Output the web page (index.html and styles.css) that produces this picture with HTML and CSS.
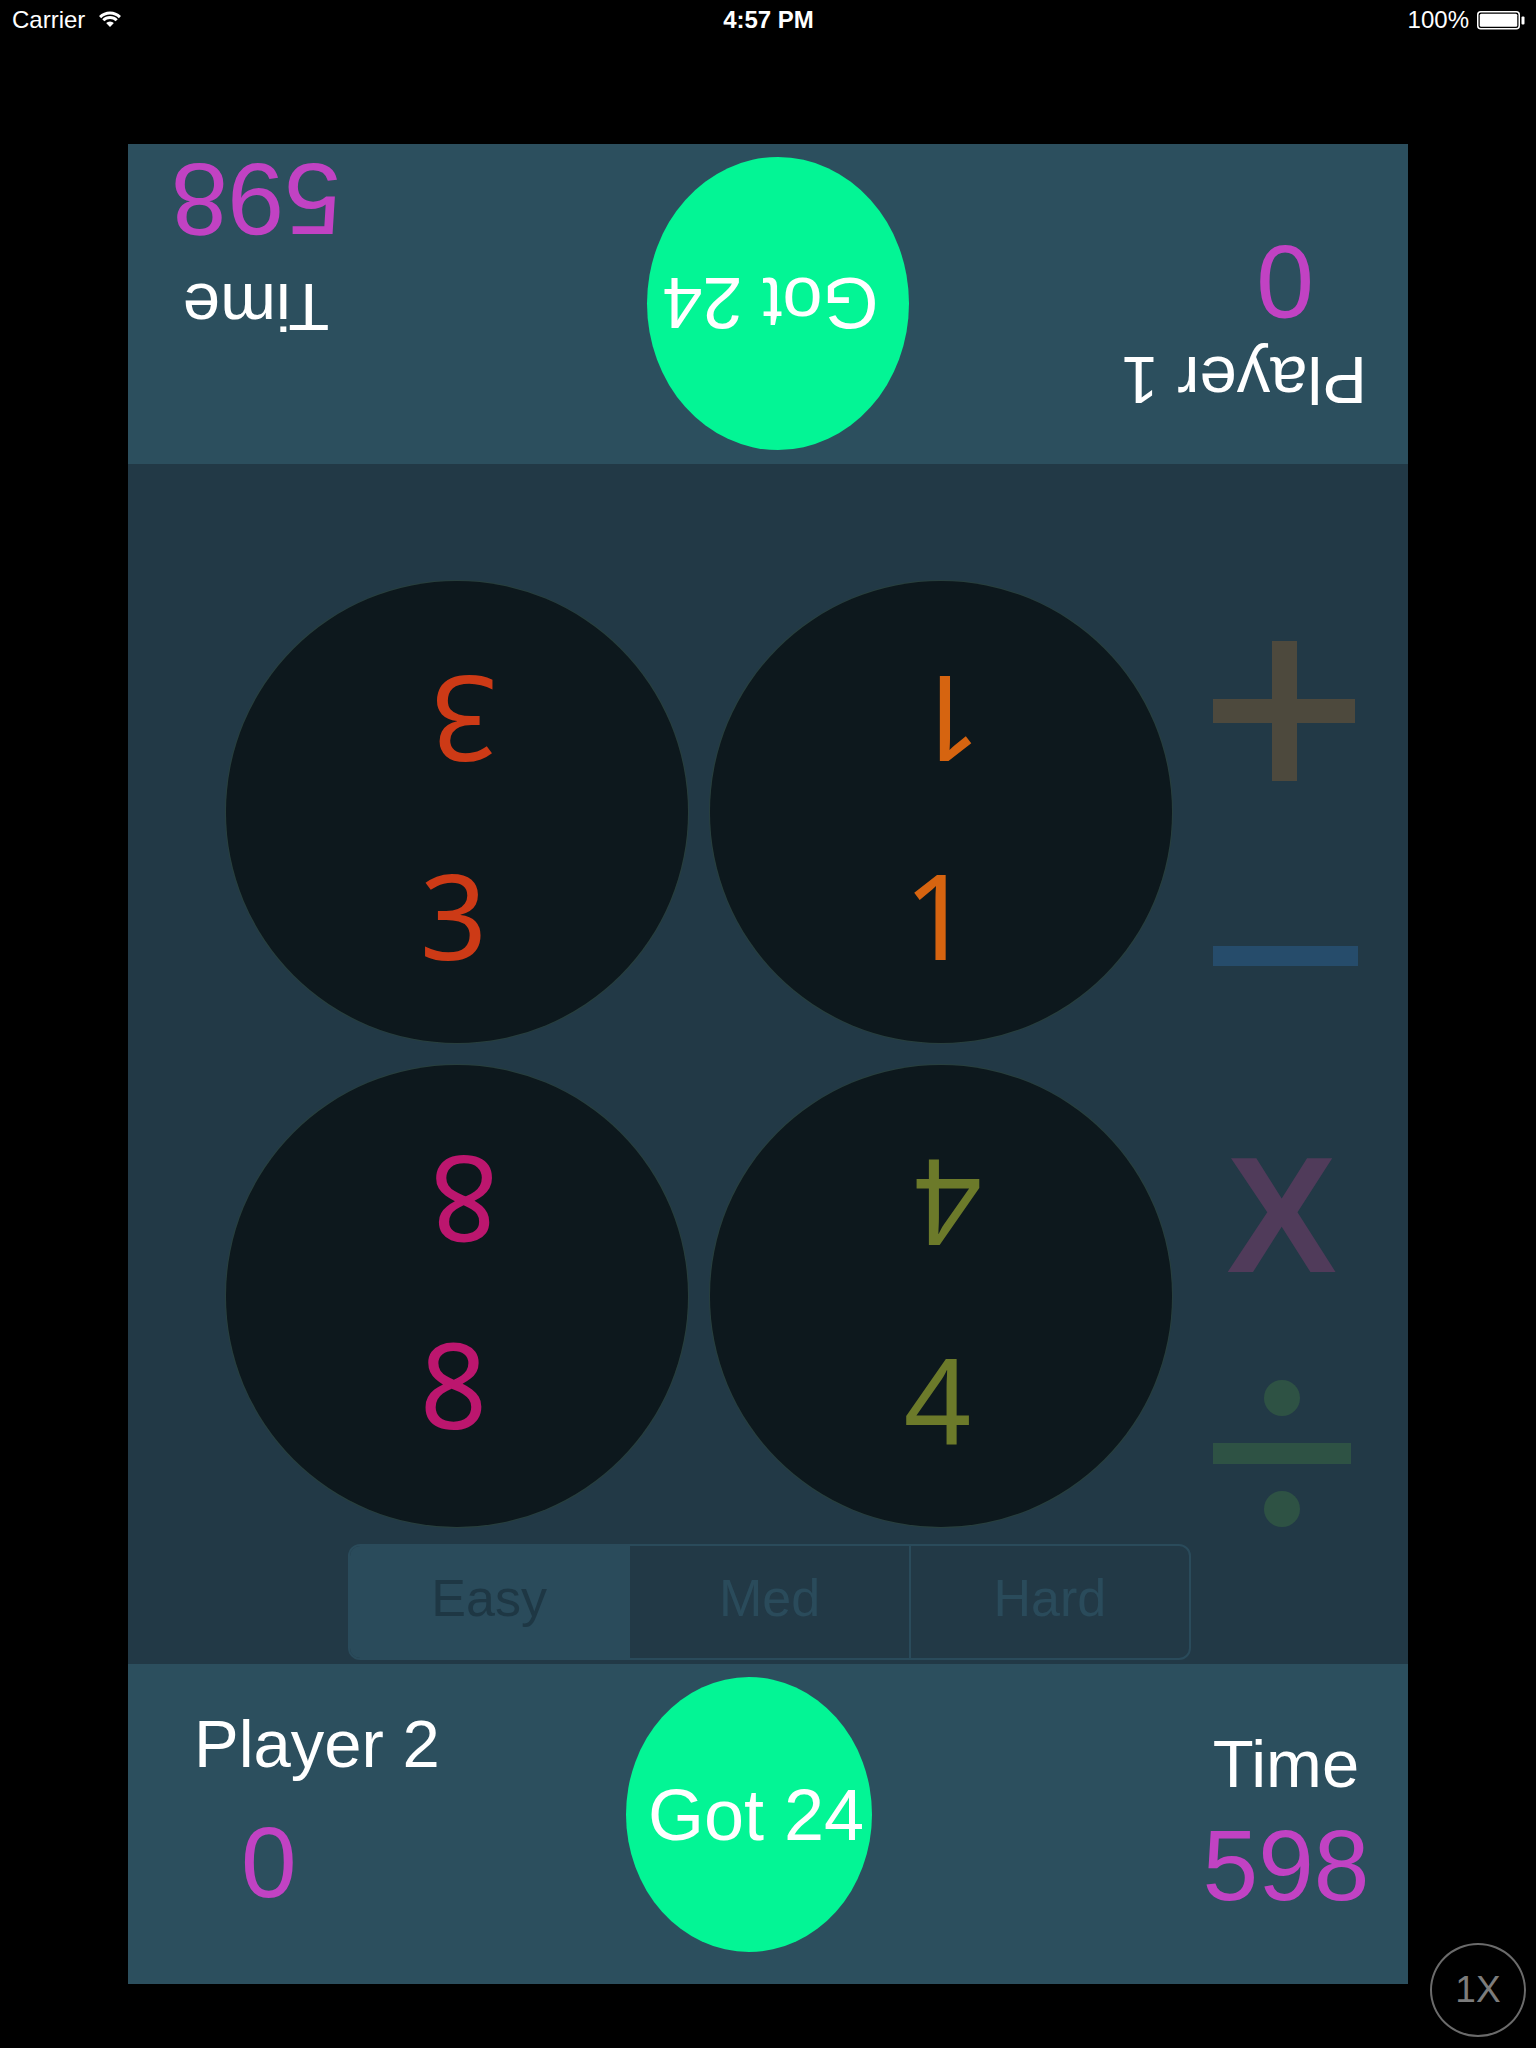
FILE: index.html
```html
<!DOCTYPE html>
<html lang="en">
<head>
<meta charset="utf-8">
<title>24 Game</title>
<link rel="stylesheet" href="styles.css">
</head>
<body>
<header class="status">
  <div class="status-left">
    <span>Carrier</span>
    <svg class="wifi" viewBox="0 0 24 16" width="24" height="16">
      <path d="M12 16 L8.1 12.1 A5.5 5.5 0 0 1 15.9 12.1 Z" fill="#fff"/>
      <path d="M5.3 9.3 A9.5 9.5 0 0 1 18.7 9.3" fill="none" stroke="#fff" stroke-width="3"/>
      <path d="M2.1 6.1 A14 14 0 0 1 21.9 6.1" fill="none" stroke="#fff" stroke-width="3"/>
    </svg>
  </div>
  <div class="status-time">4:57 PM</div>
  <div class="status-right">
    <span>100%</span>
    <svg class="battery" viewBox="0 0 48 19" width="48" height="19">
      <rect x="0.75" y="0.75" width="41.5" height="17" rx="3" fill="none" stroke="#fff" stroke-width="1.5"/>
      <rect x="2.75" y="2.75" width="37.5" height="13" rx="1.5" fill="#fff"/>
      <rect x="44.5" y="5.5" width="3" height="8" rx="1" fill="#fff"/>
    </svg>
  </div>
</header>

<main class="panel">
  <section class="bar bar--top">
    <div class="side side--player">
      <div class="label">Player 1</div>
      <div class="score">0</div>
    </div>
    <div class="got"><span>Got 24</span></div>
    <div class="side side--time">
      <div class="label">Time</div>
      <div class="timer">598</div>
    </div>
  </section>

  <section class="board">
    <div class="board-row">
      <div class="cards">
        <div class="card card--3"><span class="num num--flip">3</span><span class="num num--up">3</span></div>
        <div class="card card--1"><span class="num num--flip">1</span><span class="num num--up">1</span></div>
        <div class="card card--8"><span class="num num--flip">8</span><span class="num num--up">8</span></div>
        <div class="card card--4"><span class="num num--flip">4</span><span class="num num--up">4</span></div>
      </div>
      <div class="ops">
        <div class="op op--plus"></div>
        <div class="op op--minus"></div>
        <div class="op op--times">X</div>
        <div class="op op--div">
          <span class="dot"></span>
          <span class="div-bar"></span>
          <span class="dot"></span>
        </div>
      </div>
    </div>
    <div class="segmented">
      <div class="seg seg--on">Easy</div>
      <div class="seg">Med</div>
      <div class="seg">Hard</div>
    </div>
  </section>

  <section class="bar bar--bottom">
    <div class="side side--player">
      <div class="label">Player 2</div>
      <div class="score">0</div>
    </div>
    <div class="got"><span>Got 24</span></div>
    <div class="side side--time">
      <div class="label">Time</div>
      <div class="timer">598</div>
    </div>
  </section>
</main>

<div class="speed">1X</div>
</body>
</html>
```

FILE: styles.css
```css
html, body {
  margin: 0;
  padding: 0;
  background: #000;
}

body {
  width: 1536px;
  height: 2048px;
  font-family: "Liberation Sans", Arial, sans-serif;
  color: #fff;
  overflow: hidden;
}

/* ---------- status bar ---------- */
.status {
  height: 40px;
  display: grid;
  grid-template-columns: 1fr auto 1fr;
  align-items: center;
  padding: 0 11px 0 12px;
  font-size: 24px;
  line-height: 40px;
  color: #fff;
}

.status-left {
  display: flex;
  align-items: center;
  justify-self: start;
}

.wifi {
  margin-left: 13px;
  margin-top: -2px;
}

.status-time {
  font-weight: 700;
  font-size: 24px;
}

.status-right {
  display: flex;
  align-items: center;
  justify-self: end;
}

.battery {
  margin-left: 8px;
  margin-top: 1px;
}

/* ---------- game panel ---------- */
.panel {
  margin: 104px 0 0 128px;
  width: 1280px;
}

.bar {
  height: 320px;
  background: #2C4F5E;
  display: flex;
  align-items: flex-start;
}

.bar--top {
  transform: rotate(180deg);
}

.side {
  flex: none;
  box-sizing: border-box;
}

.label {
  font-size: 67px;
  line-height: 68px;
  height: 68px;
  white-space: nowrap;
  color: #fff;
}

.score,
.timer {
  line-height: 1;
  color: #C142C3;
  white-space: nowrap;
}

.side--time {
  width: 240px;
  text-align: center;
}

.got {
  flex: none;
  box-sizing: border-box;
  display: flex;
  align-items: center;
  justify-content: center;
  border-radius: 50%;
  background: #03F595;
  color: #fff;
  font-size: 72px;
  line-height: 72px;
  white-space: nowrap;
}

/* bottom bar */
.bar--bottom .side--player {
  width: 498px;
  padding-left: 66px;
}

.bar--bottom .side--player .label {
  margin-top: 46px;
}

.bar--bottom .score {
  margin: 34px 0 0 47px;
  font-size: 100px;
}

.bar--bottom .got {
  margin-top: 13px;
  width: 246px;
  height: 275px;
  padding-left: 14px;
}

.bar--bottom .side--time {
  margin-left: 294px;
}

.bar--bottom .side--time .label {
  margin-top: 66px;
}

.bar--bottom .timer {
  margin-top: 17px;
  font-size: 100px;
}

/* top bar (drawn in its own rotated frame) */
.bar--top .side--player {
  width: 499px;
  padding-left: 41px;
}

.bar--top .side--player .label {
  margin-top: 50px;
}

.bar--top .score {
  margin: 12px 0 0 53px;
  font-size: 104px;
}

.bar--top .got {
  margin-top: 14px;
  width: 262px;
  height: 293px;
  padding-left: 15px;
}

.bar--top .side--time {
  margin-left: 271px;
}

.bar--top .side--time .label {
  margin-top: 123px;
}

.bar--top .timer {
  margin-top: 23px;
  font-size: 102px;
}

/* ---------- board ---------- */
.board {
  height: 1200px;
  box-sizing: border-box;
  padding-top: 117px;
  background: #223946;
}

.board-row {
  display: flex;
  align-items: flex-start;
}

.cards {
  margin-left: 98px;
  display: grid;
  grid-template-columns: repeat(2, 462px);
  grid-auto-rows: 462px;
  gap: 22px;
}

.card {
  box-sizing: border-box;
  border-radius: 50%;
  background: #0D181D;
  box-shadow: 0 0 0 1px rgba(46, 70, 54, 0.55);
  display: flex;
  flex-direction: column;
  padding-top: 81px;
}

.num {
  display: block;
  box-sizing: border-box;
  height: 118px;
  font-family: "Noto Sans", "DejaVu Sans", sans-serif;
  font-size: 118px;
  line-height: 118px;
  text-align: center;
  padding-right: 7px;
}

.num--flip {
  transform: rotate(180deg);
  padding-right: 14px;
}

.num--up {
  margin-top: 76px;
}

.card--3 .num { color: #CD3A16; }
.card--1 .num { color: #D66410; }
.card--8 .num { color: #BC166E; }
.card--4 .num { color: #6C7A2A; }

.card--8 {
  padding-top: 77px;
}

.card--8 .num--up {
  margin-top: 65px;
}

/* operators */
.ops {
  margin-left: 41px;
  width: 145px;
  display: flex;
  flex-direction: column;
}

.op--plus {
  margin-top: 60px;
  width: 142px;
  height: 140px;
  background:
    linear-gradient(#4D493D, #4D493D) center / 142px 24px no-repeat,
    linear-gradient(#4D493D, #4D493D) center / 25px 140px no-repeat;
}

.op--minus {
  margin-top: 165px;
  width: 145px;
  height: 20px;
  background: #264C6B;
}

.op--times {
  margin-top: 166px;
  box-sizing: border-box;
  width: 145px;
  height: 166px;
  padding-right: 8px;
  text-align: center;
  font-weight: 700;
  font-size: 166px;
  line-height: 166px;
  color: #503B5A;
}

.op--div {
  margin-top: 82px;
  width: 138px;
  display: flex;
  flex-direction: column;
  align-items: center;
}

.dot {
  width: 36px;
  height: 36px;
  border-radius: 50%;
  background: #2E5244;
}

.div-bar {
  width: 138px;
  height: 21px;
  margin: 27px 0;
  background: #2E5244;
}

/* difficulty control */
.segmented {
  margin: 17px 0 0 220px;
  width: 843px;
  height: 116px;
  box-sizing: border-box;
  border: 2px solid #2A4B5B;
  border-radius: 12px;
  overflow: hidden;
  display: flex;
}

.seg {
  flex: 1;
  display: flex;
  align-items: center;
  justify-content: center;
  padding-bottom: 8px;
  font-size: 52px;
  line-height: 52px;
  color: #2A4B5B;
}

.seg + .seg {
  border-left: 2px solid #2A4B5B;
}

.seg--on {
  background: #2A4B5B;
  color: #1E3744;
}

/* floating speed button */
.speed {
  position: absolute;
  left: 1430px;
  top: 1943px;
  width: 96px;
  height: 94px;
  box-sizing: border-box;
  border: 2px solid #6B6B6B;
  border-radius: 50%;
  display: flex;
  align-items: center;
  justify-content: center;
  font-size: 37px;
  color: #7C7C7C;
}
```
